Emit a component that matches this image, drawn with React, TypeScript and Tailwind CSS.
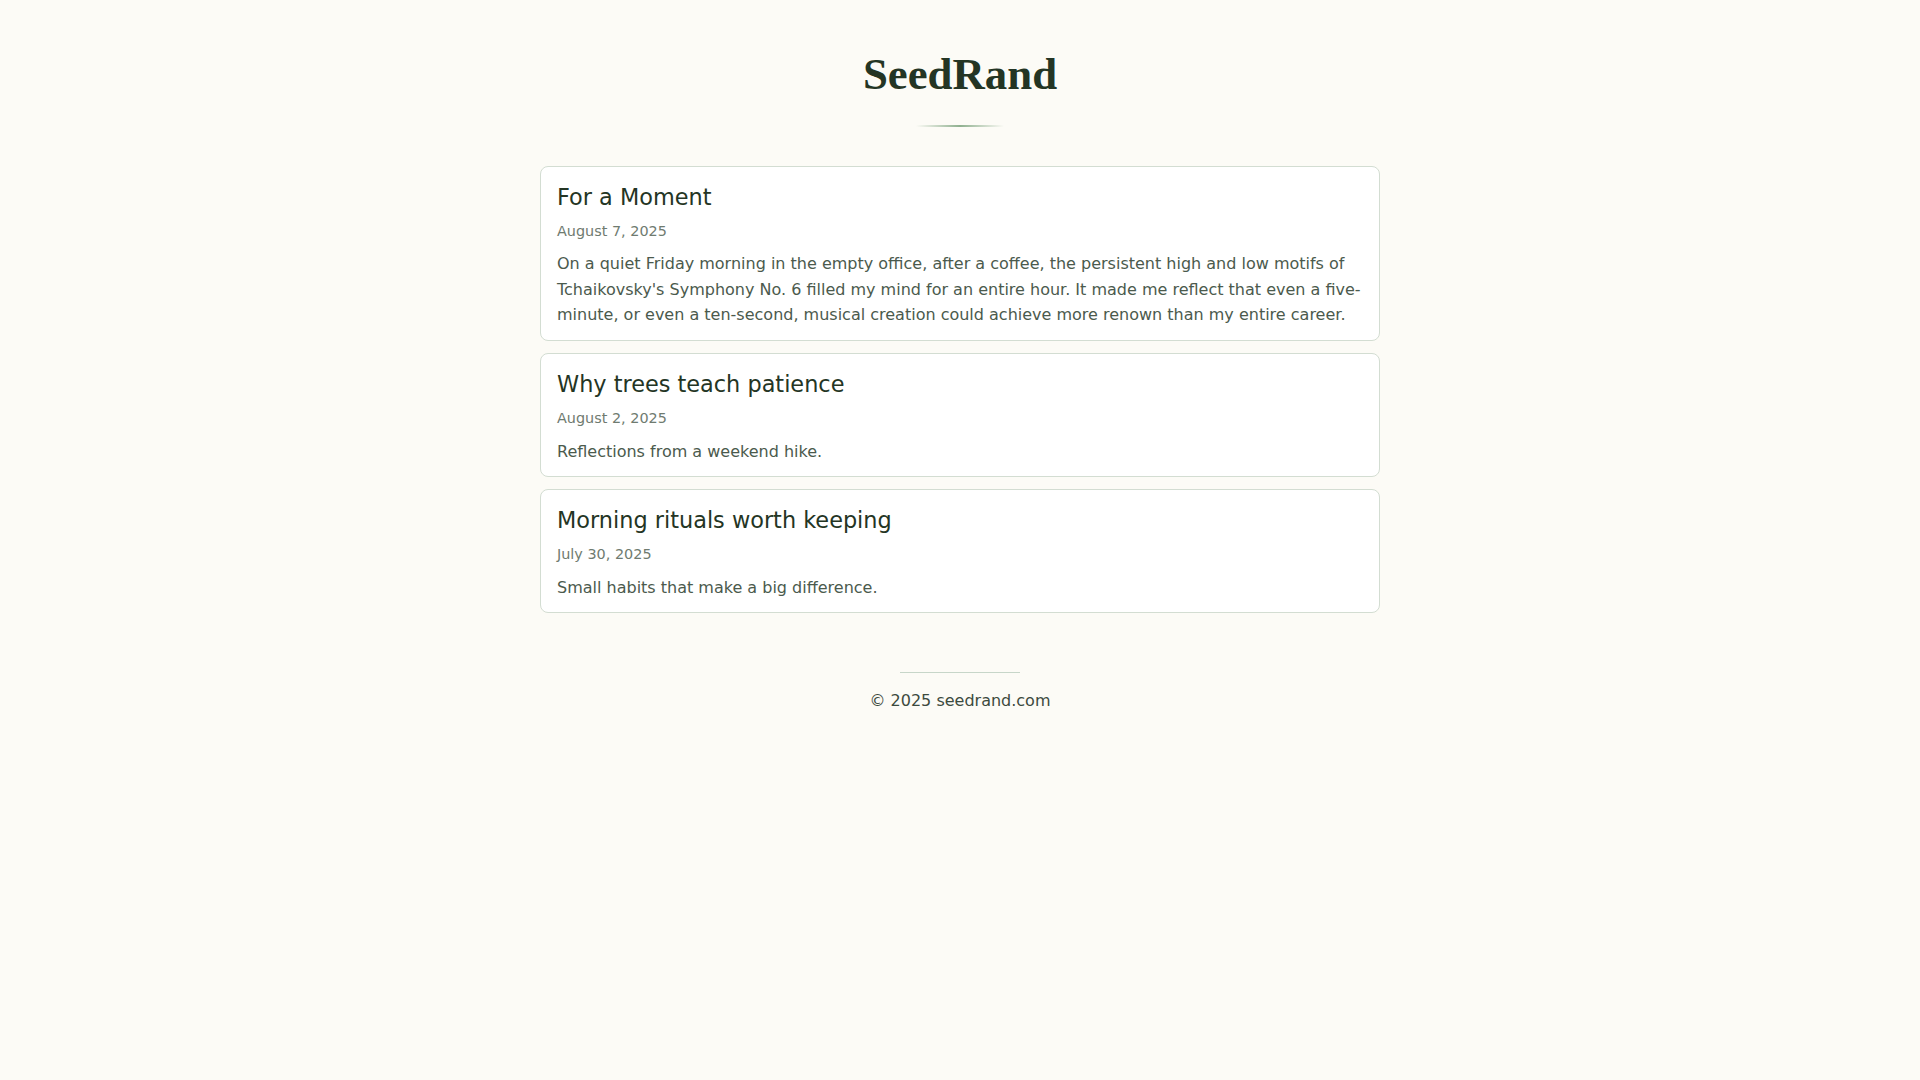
const posts = [
  {
    title: "For a Moment",
    date: "August 7, 2025",
    excerpt:
      "On a quiet Friday morning in the empty office, after a coffee, the persistent high and low motifs of Tchaikovsky's Symphony No. 6 filled my mind for an entire hour. It made me reflect that even a five-minute, or even a ten-second, musical creation could achieve more renown than my entire career.",
  },
  {
    title: "Why trees teach patience",
    date: "August 2, 2025",
    excerpt: "Reflections from a weekend hike.",
  },
  {
    title: "Morning rituals worth keeping",
    date: "July 30, 2025",
    excerpt: "Small habits that make a big difference.",
  },
];

export default function App() {
  return (
    <div className="min-h-screen bg-[#fcfbf6] font-['DejaVu_Sans',sans-serif]">
      {/* Header */}
      <header className="pt-[48px] flex flex-col items-center">
        <h1 className="font-['Liberation_Serif',serif] font-bold text-[44.8px] leading-[1.2] text-[#243524]">
          SeedRand
        </h1>
        <div className="mt-[23px] w-[88px] h-[2px] bg-gradient-to-r from-transparent via-[#8fb08f] to-transparent" />
      </header>

      {/* Posts */}
      <main className="mx-auto w-[840px] mt-[39px] flex flex-col gap-3">
        {posts.map((post) => (
          <article
            key={post.title}
            className="bg-white border border-[#d3ddd2] rounded-lg px-4 pt-[17px] pb-3"
          >
            <h2 className="text-[22.4px] leading-[1.2] text-[#243524]">{post.title}</h2>
            <p className="mt-[10px] text-[14.4px] leading-[1.5] text-[#6f7b70]">{post.date}</p>
            <p className="mt-[9px] text-[16px] leading-[1.6] text-[#4b5a4d]">{post.excerpt}</p>
          </article>
        ))}
      </main>

      {/* Footer */}
      <footer className="mt-[59px] flex flex-col items-center">
        <div className="w-[120px] h-px bg-[#c7d6c9]" />
        <p className="mt-4 text-[16px] leading-[1.5] text-[#3c4a3e]">© 2025 seedrand.com</p>
      </footer>
    </div>
  );
}
